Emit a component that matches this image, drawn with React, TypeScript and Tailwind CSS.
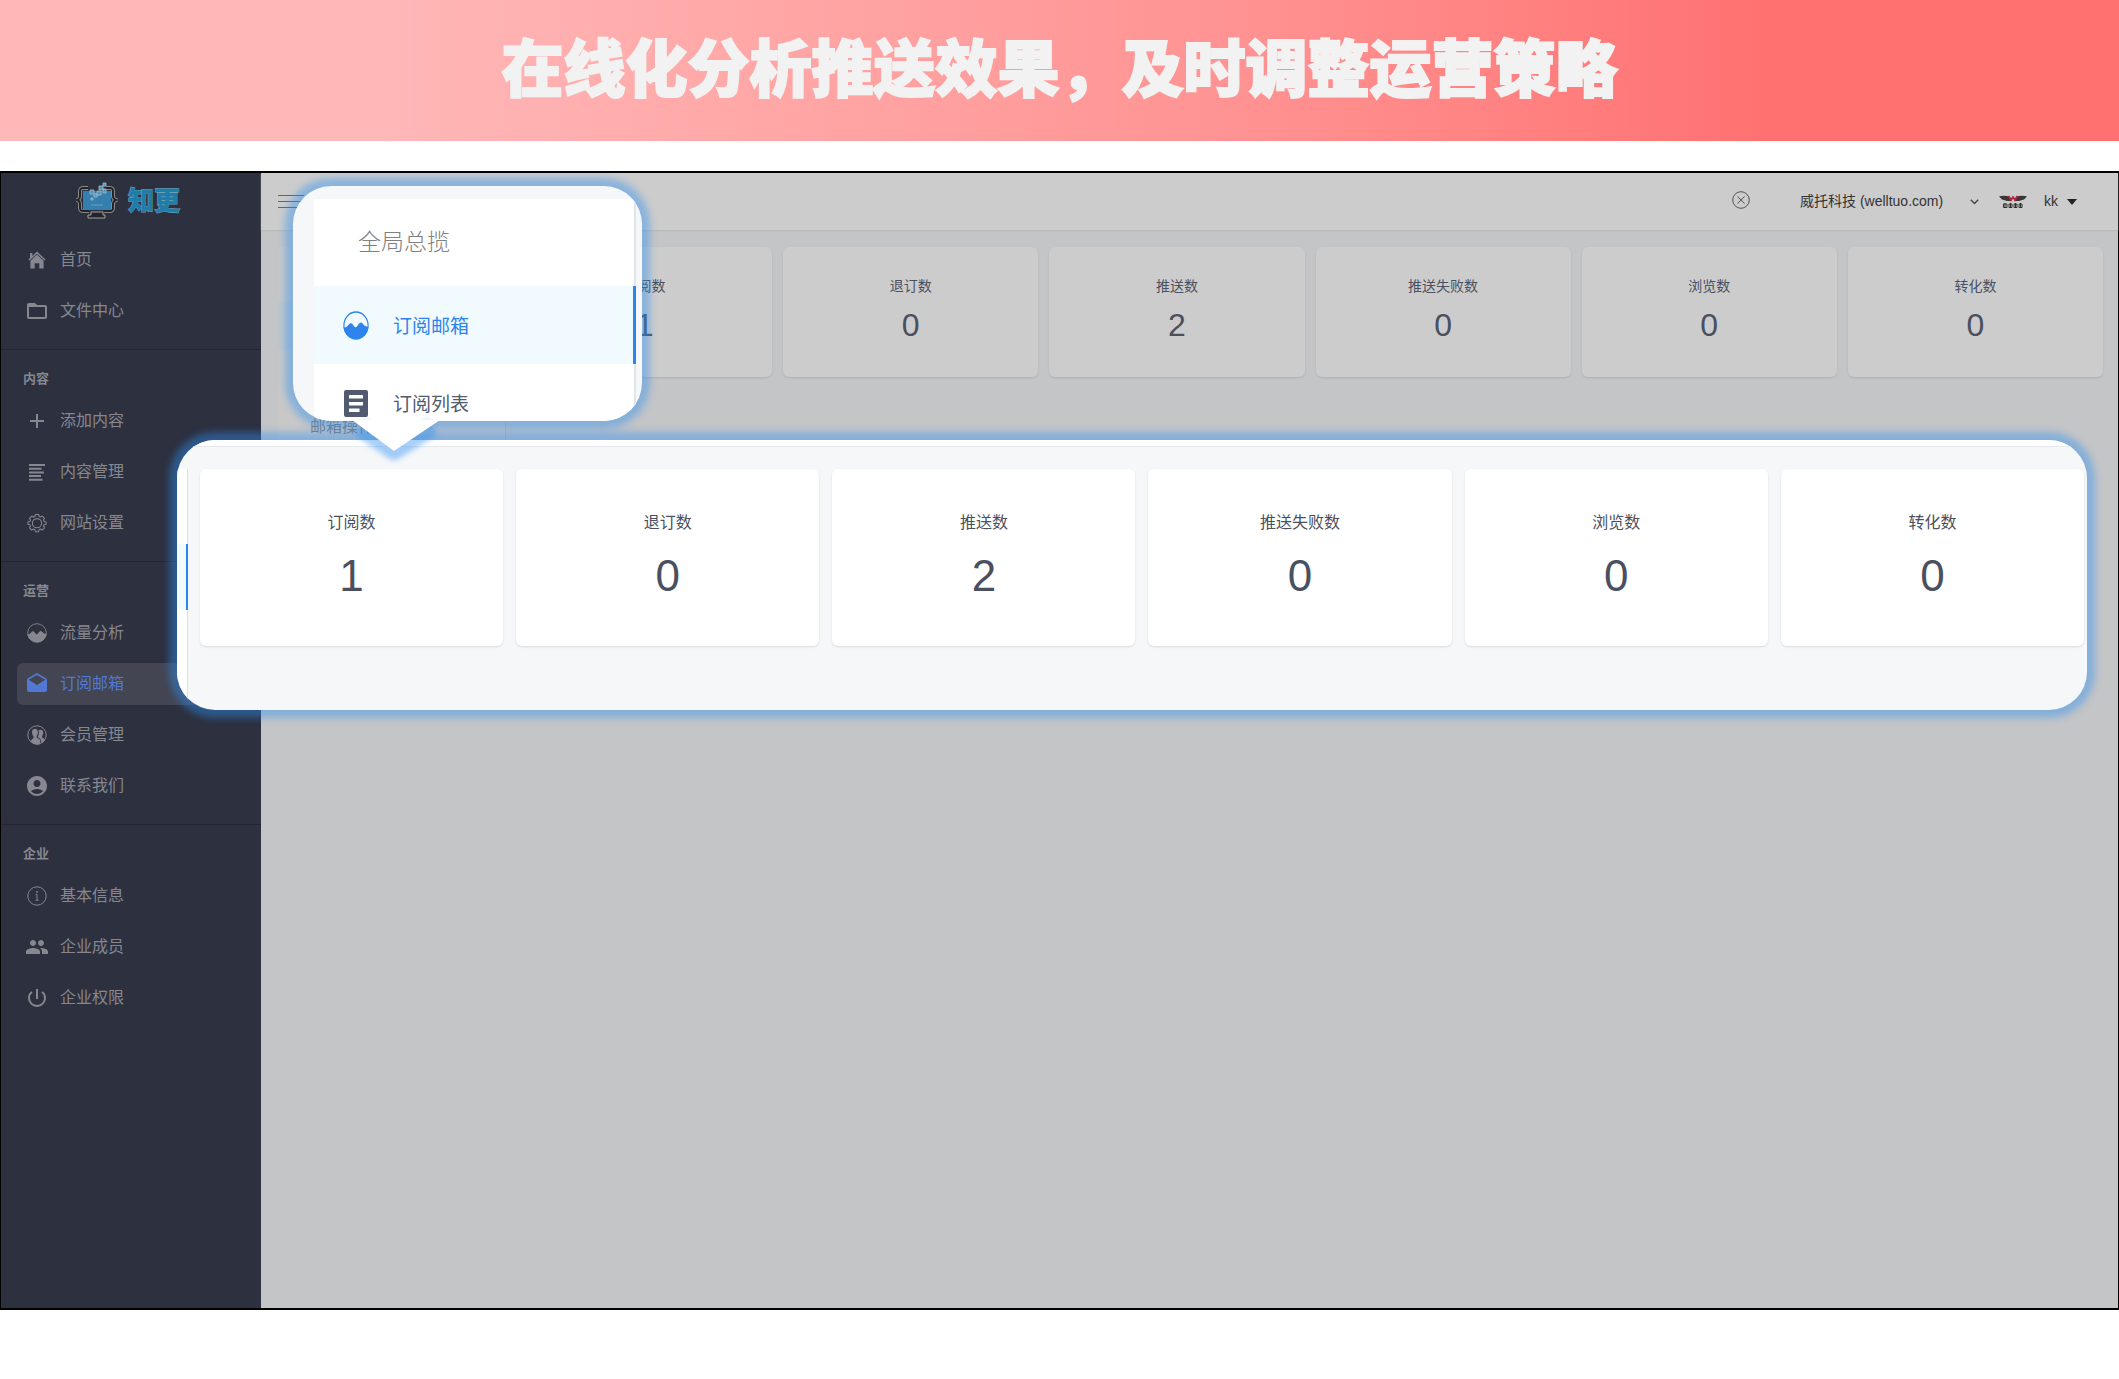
import type { ReactNode } from "react"
import { MdAccountCircle, MdDrafts, MdFolderOpen, MdPeople, MdPowerSettingsNew } from "react-icons/md"

type MenuItem = { label: string; icon: ReactNode; active?: boolean }
type MenuGroup = { title?: string; items: MenuItem[] }

const stats = [
  { label: "订阅数", value: 1 },
  { label: "退订数", value: 0 },
  { label: "推送数", value: 2 },
  { label: "推送失败数", value: 0 },
  { label: "浏览数", value: 0 },
  { label: "转化数", value: 0 },
]

const groups: MenuGroup[] = [
  {
    items: [
      { label: "首页", icon: <HomeIcon /> },
      { label: "文件中心", icon: <MdFolderOpen className="size-6" /> },
    ],
  },
  {
    title: "内容",
    items: [
      { label: "添加内容", icon: <PlusIcon /> },
      { label: "内容管理", icon: <LinesIcon /> },
      { label: "网站设置", icon: <GearIcon /> },
    ],
  },
  {
    title: "运营",
    items: [
      { label: "流量分析", icon: <WaveIcon className="size-5" /> },
      { label: "订阅邮箱", icon: <MdDrafts className="size-6" />, active: true },
      { label: "会员管理", icon: <MembersIcon /> },
      { label: "联系我们", icon: <MdAccountCircle className="size-6" /> },
    ],
  },
  {
    title: "企业",
    items: [
      { label: "基本信息", icon: <InfoIcon /> },
      { label: "企业成员", icon: <MdPeople className="size-6" /> },
      { label: "企业权限", icon: <MdPowerSettingsNew className="size-6" /> },
    ],
  },
]

function HomeIcon() {
  return (
    <svg viewBox="0 0 20 20" className="size-5" fill="currentColor">
      <path d="M10 1.6 18.6 9.6 17.6 10.6 10 3.7 2.4 10.6 1.4 9.6 3 8.1V3h2.400v2.900Z" />
      <path d="M10 4.600 16.600 10.800v7.800h-4.300v-5.400H7.700v5.400H3.400v-7.800Z" />
    </svg>
  )
}

function PlusIcon() {
  return (
    <svg viewBox="0 0 16 16" className="size-4" fill="currentColor">
      <path d="M7 1h2v6h6v2H9v6H7V9H1V7h6Z" />
    </svg>
  )
}

function LinesIcon() {
  return (
    <svg viewBox="0 0 18 18" className="size-[18px]" fill="currentColor">
      <path d="M1 1h16v2H1zM1 4.700h12.500v2H1zM1 8.400h15v2H1zM1 12.100h12v2H1zM1 15.800h13.500v2H1z" />
    </svg>
  )
}

function GearIcon() {
  return (
    <svg viewBox="0 0 20 20" className="size-5" fill="none" stroke="currentColor" strokeWidth="1.1" strokeLinejoin="round">
      <path d="M8.4 1.5h3.2l.5 2 1.4.6 1.8-1 2.2 2.2-1 1.8.6 1.4 2 .5v2.2l-2 .5-.6 1.4 1 1.8-2.2 2.2-1.8-1-1.4.6-.5 2H8.4l-.5-2-1.4-.6-1.8 1-2.2-2.2 1-1.8-.6-1.4-2-.5V9l2-.5.6-1.4-1-1.8 2.2-2.2 1.8 1 1.4-.6Z" />
      <circle cx="10" cy="10.2" r="4.6" />
    </svg>
  )
}

function WaveIcon({ className }: { className: string }) {
  return (
    <svg viewBox="0 0 20 20" className={className} preserveAspectRatio="none">
      <circle cx="10" cy="10" r="9.3" fill="none" stroke="currentColor" strokeWidth="0.9" />
      <path
        fill="currentColor"
        d="M.4 11.2c1.6.5 2.6-.3 3.7-1.6 1.200-1.500 2.300-1.700 3.600-.2 1.300 1.600 1.900 2.500 3 1.300 1-1.100 1.900-2.900 3.200-2.700 1.500.2 2.100 3 5.700 2.900a9.700 9.700 0 0 1-19.200.3Z"
      />
    </svg>
  )
}

function MembersIcon() {
  return (
    <svg viewBox="0 0 20 20" className="size-5">
      <circle cx="10" cy="10" r="9.200" fill="none" stroke="currentColor" strokeWidth="1" />
      <path
        fill="currentColor"
        d="M8 3.700c1.900 0 2.900 1.500 2.900 3.500 0 1.800-.6 3-1.300 3.900v1.500c1 .7 2.700 1 3.300 2.200.5 1 .6 2.600.3 4.200a9.300 9.300 0 0 1-9.700-2.400c.3-1.800 2.300-2.700 3-3.600v-1.800c-.8-.8-1.500-2.200-1.500-4C5 5.200 6.100 3.700 8 3.700Z"
      />
      <path
        fill="currentColor"
        d="M13.700 4.700c1.700 0 2.500 1.400 2.500 3 0 1.500-.5 2.600-1.100 3.300v1.400c.8.700 2.300 1.100 2.900 2.300a9.200 9.200 0 0 1-3.700 3.600c0-2.200-.3-4.200-1.700-5.100-.8-.6-1.500-.8-2-1.200.9-1.100 1.400-2.700 1.300-4.900 0-.7-.1-1.200-.3-1.700.5-.5 1.200-.7 2.100-.7Z"
      />
    </svg>
  )
}

function InfoIcon() {
  return (
    <svg viewBox="0 0 20 20" className="size-5" fill="none" stroke="currentColor">
      <circle cx="10" cy="10" r="9.200" />
      <path d="M8.700 8.500H10v5.700M8.500 14.200h3.200" />
      <circle cx="10" cy="6" r="0.500" fill="currentColor" />
    </svg>
  )
}

function ListIcon() {
  return (
    <svg viewBox="0 0 24 27" className="h-[27px] w-[24px]">
      <rect width="24" height="27" rx="2" fill="currentColor" />
      <path d="M5 5h14v3.500H5zM5 12h14v3.500H5zM5 18.500h10.500V22H5z" fill="#fff" />
    </svg>
  )
}

function Logo() {
  return (
    <svg viewBox="0 0 42 38" className="h-[38px] w-[42px]" fill="none">
      <path d="M12 6H7q-3 0-3 3v5q0 3-3 4 3 1 3 4v4q0 3 3 3h6M30 6h4q3 0 3 3v5q0 3 3 4-3 1-3 4v4q0 3-3 3h-6" stroke="#a8a29b" strokeWidth="3.600" />
      <path d="M12 6H7q-3 0-3 3v5q0 3-3 4 3 1 3 4v4q0 3 3 3h6M30 6h4q3 0 3 3v5q0 3 3 4-3 1-3 4v4q0 3-3 3h-6" stroke="#20242c" strokeWidth="2" />
      <path d="M7 9h28v19H7z" fill="#347fae" />
      <path d="M15 30h12v3h2v3H12v-3h3z" fill="#20242c" stroke="#a8a29b" />
      <path d="M14 8h4v4h-4zM18 12h3v3h-3zM21 9h4v4h-4zM23 4h4v4h-4zM27 1h3v3h-3zM27 7h3v4h-3zM15 16h2v2h-2z" fill="#4796bd" stroke="#a9bec8" strokeWidth="0.800" />
      <path d="M15 23h12" stroke="#88adc4" strokeWidth="0.700" />
    </svg>
  )
}

function CompanyLogo() {
  return (
    <svg viewBox="0 0 28 14" className="h-[14px] w-[28px]">
      <path d="M0 1.500q6-1.500 11 .5l1.500 4H8L3 4.500ZM28 1.500q-6-1.500-11 .5l-1.500 4H20l5-1.500Z" fill="#3c3437" />
      <path d="m9.500 1 2.500 4 2-3 2 3 2.500-4" fill="none" stroke="#b0263c" strokeWidth="1.800" />
      <path d="M4.500 9h3.500v3.500H4.500zM10 9h3v3.500h-3zM15 9h3v3.500h-3zM20 9h3v3.500h-3zM6 8v5M11.500 8v5M16.500 8v5M21.500 8v5" fill="none" stroke="#333" strokeWidth="1" />
    </svg>
  )
}

function Sidebar() {
  return (
    <aside className="w-[260px] shrink-0 bg-[#2d303f] text-[#86878f]">
      <div className="flex h-[56px] items-center gap-[10px] pl-[75px]">
        <Logo />
        <span className="text-[26px] leading-8 font-black text-[#1d7dab] [-webkit-text-stroke:1px_#6d9fb8] [paint-order:stroke_fill]">知更</span>
      </div>
      <nav className="pt-[10px]">
        {groups.map((group, i) => (
          <div key={i} className={group.title ? "mt-[17px] border-t border-[#24262f] pt-[17px]" : ""}>
            {group.title && <h2 className="mb-[9px] pl-[22px] text-[13px] leading-6 font-bold">{group.title}</h2>}
            <ul className="flex flex-col gap-[9px] pl-4 pr-4">
              {group.items.map((item) => (
                <li key={item.label}>
                  <a
                    href="#"
                    className={`flex h-[42px] items-center gap-[11px] rounded-md pl-2 text-[16px] ${item.active ? "bg-[#434553] text-[#5378d2]" : ""}`}
                  >
                    <span className="flex w-6 justify-center">{item.icon}</span>
                    {item.label}
                  </a>
                </li>
              ))}
            </ul>
          </div>
        ))}
      </nav>
    </aside>
  )
}

function Topbar() {
  return (
    <header className="flex h-[57px] items-center bg-[#cccccc] pr-[41px] pl-[17px] shadow-[0_1px_1px_#b9babc]">
      <button aria-label="菜单" className="flex w-[26px] flex-col gap-[5px]">
        <span className="h-px bg-[#666]" />
        <span className="h-px bg-[#666]" />
        <span className="h-px bg-[#666]" />
      </button>
      <button aria-label="关闭" className="mr-[50px] mb-1 ml-auto text-[#555]">
        <svg viewBox="0 0 18 18" className="size-[18px]" fill="none" stroke="currentColor">
          <circle cx="9" cy="9" r="8.300" />
          <path d="m5.500 5.500 7 7m0-7-7 7" />
        </svg>
      </button>
      <select aria-label="站点" className="mr-[26px] appearance-none bg-transparent text-[14px] text-[#333]">
        <option>威托科技 (welltuo.com)</option>
      </select>
      <svg viewBox="0 0 9 6" className="mr-[20px] w-[9px]" fill="none" stroke="#444" strokeWidth="1.400">
        <path d="m.8.8 3.700 3.700L8.200.8" />
      </svg>
      <CompanyLogo />
      <button className="ml-[17px] flex items-center gap-[9px] text-[14px] text-[#333]">
        kk
        <svg viewBox="0 0 10 6" className="w-[10px]" fill="#222">
          <path d="M0 0h10L5 6Z" />
        </svg>
      </button>
    </header>
  )
}

function Dashboard() {
  return (
    <main className="flex items-start gap-[11px] pt-[17px] pr-[15px] pl-[17px]">
      <div className="w-[228px] shrink-0 border-r border-[#b5b8bb] bg-[#c8c8c8] text-[16px] text-[#7d7d7d]">
        <div className="h-[55px]" />
        <div className="h-12 bg-[#bfc7cb]" />
        <div className="h-12" />
        <h3 className="h-[160px] pt-[17px] pl-8 leading-6">邮箱操作</h3>
      </div>
      <div className="grid flex-1 grid-cols-6 gap-[11px]">
        {stats.map((s) => (
          <div key={s.label} className="rounded-md bg-[#cccccc] pt-[28px] pb-[32px] text-center text-[#4a5060] shadow-[0_1px_2px_#aeb0b3]">
            <p className="text-[14px] leading-[22px]">{s.label}</p>
            <p className="mt-[8px] text-[32px] leading-10">{s.value}</p>
          </div>
        ))}
      </div>
    </main>
  )
}

// enlarged submenu
function MenuCallout() {
  return (
    <div className="absolute top-[13px] left-[292px] w-[349px]">
      <div className="h-[235px] overflow-hidden rounded-[38px] bg-[#f5f7f9] pt-[13px] pl-[21px] shadow-[0_0_7px_8px_rgba(45,146,243,0.42)]">
        <div className="w-[322px] border-r-2 border-[#e3e6e9] bg-white">
          <h3 className="h-[87px] pt-[27px] pl-[44px] text-[23px] leading-8 font-light text-[#808080]">全局总揽</h3>
          <a href="#" className="-mr-[2px] flex h-[78px] items-center gap-[24px] border-r-[3px] border-[#2d84ec] bg-[#f0faff] pl-[29px] text-[19px] text-[#2d84ec]">
            <WaveIcon className="h-[29px] w-[26px]" />
            <span className="pt-1">订阅邮箱</span>
          </a>
          <a href="#" className="flex h-[78px] items-center gap-[25px] pl-[30px] text-[19px] text-[#515a6e]">
            <ListIcon />
            <span className="pt-1">订阅列表</span>
          </a>
        </div>
      </div>
      <svg viewBox="0 0 120 50" className="absolute top-[234px] left-[42px] h-[50px] w-[120px] overflow-visible">
        <defs>
          <filter id="glow" x="-30%" y="-60%" width="160%" height="260%">
            <feGaussianBlur stdDeviation="2.500" />
          </filter>
        </defs>
        <path d="M24 7 59 31 98 7" fill="none" stroke="#2d92f3" strokeOpacity="0.420" strokeWidth="18" strokeLinejoin="round" filter="url(#glow)" />
        <path d="M17 0h88L59 31Z" fill="#fff" />
      </svg>
    </div>
  )
}

// enlarged statistics row
function StatsCallout() {
  return (
    <div className="absolute top-[267px] right-[31px] left-[176px] flex h-[270px] flex-col overflow-hidden rounded-[38px] bg-[#f5f7f9] shadow-[0_0_7px_8px_rgba(45,146,243,0.42)]">
      <div className="h-[7px] border-b border-[#e6e8eb] bg-white" />
      <div className="flex flex-1 pt-[22px]">
        <div className="mr-[12px] w-[11px] border-r border-[#dcdee2] bg-white pt-[75px]">
          <div className="-mr-px h-[66px] border-r-2 border-[#2d84ec] bg-[#f0faff]" />
        </div>
        <div className="grid flex-1 grid-cols-6 items-start gap-[13px] pr-[3px]">
          {stats.map((s) => (
            <div key={s.label} className="rounded-md bg-white pt-[42px] pb-[45px] text-center text-[#4a5060] shadow-[0_1px_2px_#d8dadd]">
              <p className="text-[16px] leading-6">{s.label}</p>
              <p className="mt-[16px] text-[44px] leading-[50px]">{s.value}</p>
            </div>
          ))}
        </div>
      </div>
    </div>
  )
}

export default function App() {
  return (
    <div className="flex min-h-screen flex-col bg-white pb-[69px] font-['Liberation_Sans','Noto_Sans_CJK_SC',sans-serif]">
      <div className="mb-[30px] flex h-[141px] items-center justify-center bg-linear-to-r from-[#ffb7b7] from-18% via-[#ff9393] via-58% to-[#ff7070] to-84%">
        <h1 className="text-[62px] leading-[80px] font-black text-[#f2f2f2] [-webkit-text-stroke:2px_#f2f2f2] [stroke-linejoin:round]">
          在线化分析推送效果，及时调整运营策略
        </h1>
      </div>
      <div className="relative flex flex-1 border-x border-y-2 border-black bg-[#c4c5c7]">
        <Sidebar />
        <div className="flex-1">
          <Topbar />
          <Dashboard />
        </div>
        <StatsCallout />
        <MenuCallout />
      </div>
    </div>
  )
}
